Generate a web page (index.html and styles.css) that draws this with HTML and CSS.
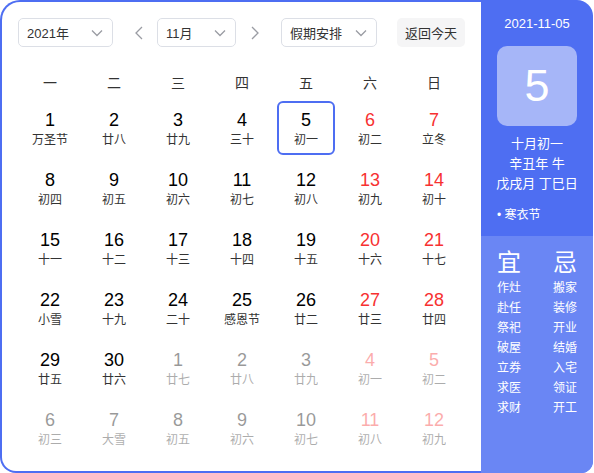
FILE: index.html
```html
<!DOCTYPE html>
<html lang="zh-CN">
<head>
<meta charset="utf-8">
<link rel="stylesheet" href="styles.css">
</head>
<body>
<div class="cal">
  <div class="main">
    <div class="toolbar">
      <div class="select sel-year"><span>2021年</span><svg class="chev" viewBox="0 0 12 8" width="12" height="8"><path d="M1 1.5 L6 6.5 L11 1.5" /></svg></div>
      <svg class="arrow prev" viewBox="0 0 9 14" width="9" height="14"><path d="M8 1 L2 7 L8 13" /></svg>
      <div class="select sel-month"><span>11月</span><svg class="chev" viewBox="0 0 12 8" width="12" height="8"><path d="M1 1.5 L6 6.5 L11 1.5" /></svg></div>
      <svg class="arrow next" viewBox="0 0 9 14" width="9" height="14"><path d="M1 1 L7 7 L1 13" /></svg>
      <div class="select sel-holiday"><span>假期安排</span><svg class="chev" viewBox="0 0 12 8" width="12" height="8"><path d="M1 1.5 L6 6.5 L11 1.5" /></svg></div>
      <div class="today-btn">返回今天</div>
    </div>
    <div class="weekdays">
      <div>一</div><div>二</div><div>三</div><div>四</div><div>五</div><div>六</div><div>日</div>
    </div>
    <div class="days">
      <div class="day"><div class="n">1</div><div class="l">万圣节</div></div>
      <div class="day"><div class="n">2</div><div class="l">廿八</div></div>
      <div class="day"><div class="n">3</div><div class="l">廿九</div></div>
      <div class="day"><div class="n">4</div><div class="l">三十</div></div>
      <div class="day selected"><div class="n">5</div><div class="l">初一</div></div>
      <div class="day we"><div class="n">6</div><div class="l">初二</div></div>
      <div class="day we"><div class="n">7</div><div class="l">立冬</div></div>

      <div class="day"><div class="n">8</div><div class="l">初四</div></div>
      <div class="day"><div class="n">9</div><div class="l">初五</div></div>
      <div class="day"><div class="n">10</div><div class="l">初六</div></div>
      <div class="day"><div class="n">11</div><div class="l">初七</div></div>
      <div class="day"><div class="n">12</div><div class="l">初八</div></div>
      <div class="day we"><div class="n">13</div><div class="l">初九</div></div>
      <div class="day we"><div class="n">14</div><div class="l">初十</div></div>

      <div class="day"><div class="n">15</div><div class="l">十一</div></div>
      <div class="day"><div class="n">16</div><div class="l">十二</div></div>
      <div class="day"><div class="n">17</div><div class="l">十三</div></div>
      <div class="day"><div class="n">18</div><div class="l">十四</div></div>
      <div class="day"><div class="n">19</div><div class="l">十五</div></div>
      <div class="day we"><div class="n">20</div><div class="l">十六</div></div>
      <div class="day we"><div class="n">21</div><div class="l">十七</div></div>

      <div class="day"><div class="n">22</div><div class="l">小雪</div></div>
      <div class="day"><div class="n">23</div><div class="l">十九</div></div>
      <div class="day"><div class="n">24</div><div class="l">二十</div></div>
      <div class="day"><div class="n">25</div><div class="l">感恩节</div></div>
      <div class="day"><div class="n">26</div><div class="l">廿二</div></div>
      <div class="day we"><div class="n">27</div><div class="l">廿三</div></div>
      <div class="day we"><div class="n">28</div><div class="l">廿四</div></div>

      <div class="day"><div class="n">29</div><div class="l">廿五</div></div>
      <div class="day"><div class="n">30</div><div class="l">廿六</div></div>
      <div class="day other"><div class="n">1</div><div class="l">廿七</div></div>
      <div class="day other"><div class="n">2</div><div class="l">廿八</div></div>
      <div class="day other"><div class="n">3</div><div class="l">廿九</div></div>
      <div class="day other we"><div class="n">4</div><div class="l">初一</div></div>
      <div class="day other we"><div class="n">5</div><div class="l">初二</div></div>

      <div class="day other"><div class="n">6</div><div class="l">初三</div></div>
      <div class="day other"><div class="n">7</div><div class="l">大雪</div></div>
      <div class="day other"><div class="n">8</div><div class="l">初五</div></div>
      <div class="day other"><div class="n">9</div><div class="l">初六</div></div>
      <div class="day other"><div class="n">10</div><div class="l">初七</div></div>
      <div class="day other we"><div class="n">11</div><div class="l">初八</div></div>
      <div class="day other we"><div class="n">12</div><div class="l">初九</div></div>
    </div>
  </div>
  <div class="side">
    <div class="side-top">
      <div class="date">2021-11-05</div>
      <div class="bigday">5</div>
      <div class="lunar">
        <div>十月初一</div>
        <div>辛丑年 牛</div>
        <div>戊戌月 丁巳日</div>
      </div>
      <div class="fest">• 寒衣节</div>
    </div>
    <div class="side-bottom">
      <div class="col">
        <div class="head">宜</div>
        <div>作灶</div><div>赴任</div><div>祭祀</div><div>破屋</div><div>立券</div><div>求医</div><div>求财</div>
      </div>
      <div class="col">
        <div class="head">忌</div>
        <div>搬家</div><div>装修</div><div>开业</div><div>结婚</div><div>入宅</div><div>领证</div><div>开工</div>
      </div>
    </div>
  </div>
</div>
</body>
</html>
```
FILE: styles.css
```css
* { box-sizing: border-box; }
body {
  margin: 0;
  font-family: "Liberation Sans", Arial, "Noto Sans CJK SC", sans-serif;
  background: #fff;
}
.cal {
  width: 593px;
  height: 473px;
  background: #4e6ef2;
  border-radius: 20px 16px 12px 16px;
  overflow: hidden;
  display: flex;
}
.main {
  width: 479px;
  margin: 2px 0 2px 2px;
  background: #fff;
  border-radius: 18px 0 0 14px;
  padding: 16px 0 0 16px;
}
.toolbar {
  display: flex;
  align-items: center;
  height: 29px;
}
.select {
  height: 29px;
  border: 1px solid #dcdfe6;
  border-radius: 5px;
  display: flex;
  align-items: center;
  justify-content: space-between;
  padding: 0 9px 0 8px;
  font-size: 13px;
  color: #333;
}
.sel-year { width: 95px; }
.sel-month { width: 79px; }
.sel-holiday { width: 96px; }
.chev path, .arrow path {
  fill: none;
  stroke: #9a9ca3;
  stroke-width: 1.3;
}
.arrow { flex: none; }
.prev { margin: 0 14px 0 21px; }
.next { margin: 0 21px 0 15px; }
.today-btn {
  margin-left: 20px;
  width: 68px;
  height: 29px;
  border-radius: 5px;
  background: #f5f5f6;
  font-size: 13px;
  color: #333;
  display: flex;
  align-items: center;
  justify-content: center;
}
.weekdays {
  margin-top: 19px;
  display: grid;
  grid-template-columns: repeat(7, 64px);
  height: 32px;
  align-items: center;
  text-align: center;
  font-size: 14px;
  color: #333;
}
.days {
  display: grid;
  grid-template-columns: repeat(7, 64px);
  grid-auto-rows: 60px;
}
.day {
  margin: 3px;
  border: 2px solid transparent;
  border-radius: 6px;
  text-align: center;
  padding-top: 7px;
}
.day .n {
  font-size: 18px;
  line-height: 20px;
  color: #000;
}
.day .l {
  font-size: 12px;
  line-height: 20px;
  color: #333;
}
.day.we .n { color: #f73131; }
.day.other { opacity: 0.4; }
.day.selected { border-color: #4e6ef2; }
.side {
  flex: 1;
  display: flex;
  flex-direction: column;
  color: #fff;
}
.side-top {
  height: 236px;
  padding-top: 15px;
  display: flex;
  flex-direction: column;
  align-items: center;
}
.date {
  font-size: 13px;
  line-height: 18px;
}
.bigday {
  margin-top: 13px;
  width: 80px;
  height: 80px;
  border-radius: 10px;
  background: #a6b6f8;
  font-size: 45px;
  display: flex;
  align-items: center;
  justify-content: center;
}
.lunar {
  margin-top: 8px;
  font-size: 13px;
  line-height: 20px;
  text-align: center;
}
.fest {
  align-self: flex-start;
  margin: 11px 0 0 16px;
  font-size: 12px;
  line-height: 20px;
}
.side-bottom {
  flex: 1;
  background: #6a86f4;
  display: flex;
  padding: 11px 0 0 16px;
  gap: 32px;
  font-size: 12px;
  line-height: 20px;
}
.col .head {
  font-size: 24px;
  line-height: 31px;
}
```
